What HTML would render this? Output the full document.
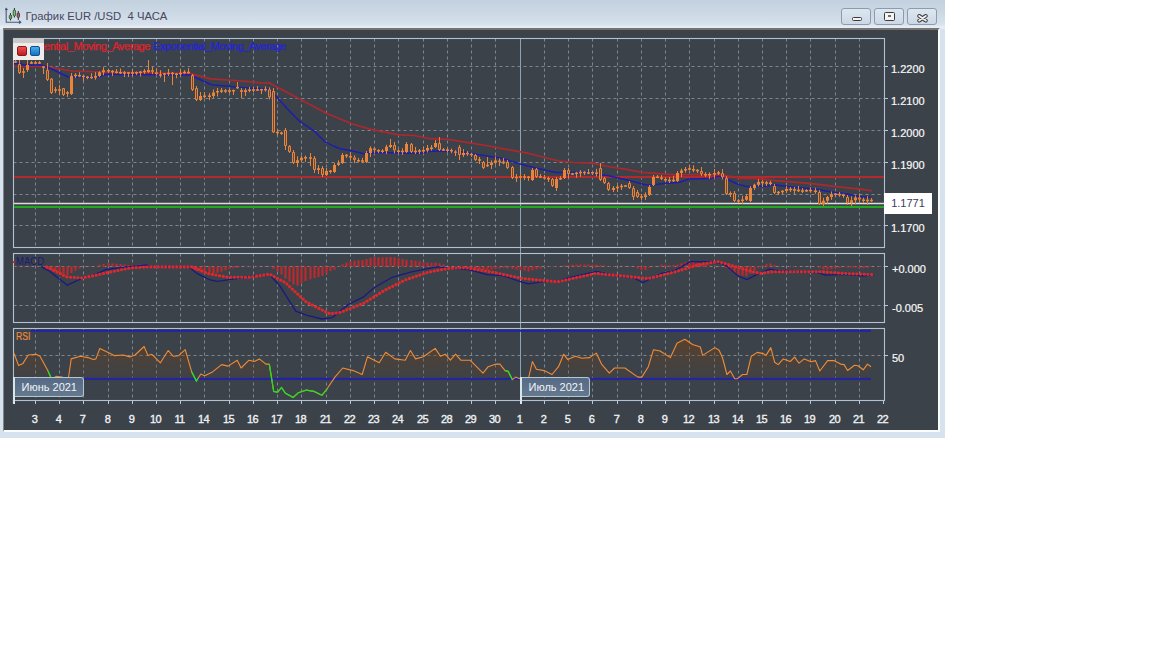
<!DOCTYPE html>
<html><head><meta charset="utf-8"><style>
*{margin:0;padding:0;box-sizing:border-box}
body{width:1152px;height:648px;background:#fff;position:relative;overflow:hidden;font-family:"Liberation Sans",sans-serif}
#win{position:absolute;left:0;top:0;width:945px;height:438px;background:#d6e2ee}
#title{position:absolute;left:0;top:0;width:945px;height:29px;background:linear-gradient(#c3d1de 0px,#cbd8e4 12px,#d6e1ed 24px,#e6edf5 27px,#e6edf5 29px)}
#ttext{position:absolute;left:25.5px;top:10px;font-size:11.3px;color:#48485e;white-space:pre;line-height:13px}
.btn{position:absolute;top:8px;width:30px;height:17px;border:1px solid #8c9cac;border-radius:3px;background:linear-gradient(#dde7f0,#ccd8e4)}
#inner{position:absolute;left:3px;top:28px;width:937px;height:404px;background:#3c424a;border-top:2px solid #77736e;border-left:1px solid #80858a;border-right:2px solid #fafcfe;border-bottom:2px solid #fafcfe}
.lbl{position:absolute;font-size:11px;color:#f8f8f8;-webkit-text-stroke:0.2px #f8f8f8;white-space:pre;line-height:12px}
.dl{position:absolute;top:412.5px;font-size:11px;color:#f0f2f4;-webkit-text-stroke:0.35px #f0f2f4;letter-spacing:-0.6px;white-space:pre;line-height:12px;transform:translateX(-50%)}
.month{position:absolute;height:20px;top:377px;background:linear-gradient(#566a86,#64788e);border:1px solid #b4c8d4;border-left:none;border-radius:0 3px 3px 0;color:#f2f4f6;font-size:11px;line-height:19px;padding-left:7.5px}
.mline{position:absolute;width:1.6px;background:#d4e8ea}
</style></head><body>
<div id="win">
<div id="title"></div>
<svg style="position:absolute;left:5px;top:7px" width="18" height="18" viewBox="0 0 18 18">
<path d="M1.2,1.5V15.2H15.6M-0.2,3L1.2,1.4L2.6,3M14,13.8L15.8,15.2L14,16.6" stroke="#4a5a7a" stroke-width="1.1" fill="none"/>
<path d="M5.5,6V13.5M9.4,1V10.5M13.3,4V13" stroke="#303030" stroke-width="1"/>
<rect x="4.3" y="8" width="2.4" height="4" rx="1" fill="#6aa86a" stroke="#2c4a2c" stroke-width="0.8"/>
<rect x="8.2" y="3" width="2.4" height="6" rx="1" fill="#7dbb7d" stroke="#2c4a2c" stroke-width="0.8"/>
<rect x="12.1" y="6" width="2.4" height="4.5" rx="1" fill="#a06070" stroke="#4a2c30" stroke-width="0.8"/>
</svg>
<div id="ttext">График EUR /USD  4 ЧАСА</div>
<div class="btn" style="left:841px"><div style="position:absolute;left:9.5px;top:7.5px;width:10.5px;height:4.5px;background:#f4f4f4;border:1px solid #3a3a3a;border-radius:1.5px"></div></div>
<div class="btn" style="left:874px"><div style="position:absolute;left:9px;top:3px;width:11px;height:9px;background:#f4f4f4;border:1.5px solid #3a3a3a;border-radius:1.5px"><div style="position:absolute;left:2.5px;top:2.2px;width:3.5px;height:2.2px;border:1px solid #707070;background:#ddd"></div></div></div>
<div class="btn" style="left:907px"><svg style="position:absolute;left:8px;top:2px" width="14" height="12" viewBox="0 0 14 12"><path d="M3.2,4.9L9.8,9.6M9.8,4.9L3.2,9.6" stroke="#3a3a3a" stroke-width="3.8" stroke-linecap="round"/><path d="M3.2,4.9L9.8,9.6M9.8,4.9L3.2,9.6" stroke="#f4f4f4" stroke-width="1.9" stroke-linecap="round"/></svg></div>
<div id="inner"></div>
</div>
<svg style="position:absolute;left:0;top:0" width="945" height="438" viewBox="0 0 945 438"><path d="M35.5,38.5V247.5M59.5,38.5V247.5M83.5,38.5V247.5M108.5,38.5V247.5M132.5,38.5V247.5M156.5,38.5V247.5M180.5,38.5V247.5M204.5,38.5V247.5M229.5,38.5V247.5M253.5,38.5V247.5M277.5,38.5V247.5M301.5,38.5V247.5M326.5,38.5V247.5M350.5,38.5V247.5M374.5,38.5V247.5M398.5,38.5V247.5M423.5,38.5V247.5M447.5,38.5V247.5M471.5,38.5V247.5M495.5,38.5V247.5M544.5,38.5V247.5M568.5,38.5V247.5M592.5,38.5V247.5M617.5,38.5V247.5M641.5,38.5V247.5M665.5,38.5V247.5M689.5,38.5V247.5M714.5,38.5V247.5M738.5,38.5V247.5M762.5,38.5V247.5M786.5,38.5V247.5M810.5,38.5V247.5M835.5,38.5V247.5M859.5,38.5V247.5M35.5,253.5V322.5M59.5,253.5V322.5M83.5,253.5V322.5M108.5,253.5V322.5M132.5,253.5V322.5M156.5,253.5V322.5M180.5,253.5V322.5M204.5,253.5V322.5M229.5,253.5V322.5M253.5,253.5V322.5M277.5,253.5V322.5M301.5,253.5V322.5M326.5,253.5V322.5M350.5,253.5V322.5M374.5,253.5V322.5M398.5,253.5V322.5M423.5,253.5V322.5M447.5,253.5V322.5M471.5,253.5V322.5M495.5,253.5V322.5M544.5,253.5V322.5M568.5,253.5V322.5M592.5,253.5V322.5M617.5,253.5V322.5M641.5,253.5V322.5M665.5,253.5V322.5M689.5,253.5V322.5M714.5,253.5V322.5M738.5,253.5V322.5M762.5,253.5V322.5M786.5,253.5V322.5M810.5,253.5V322.5M835.5,253.5V322.5M859.5,253.5V322.5M35.5,328.5V400.5M59.5,328.5V400.5M83.5,328.5V400.5M108.5,328.5V400.5M132.5,328.5V400.5M156.5,328.5V400.5M180.5,328.5V400.5M204.5,328.5V400.5M229.5,328.5V400.5M253.5,328.5V400.5M277.5,328.5V400.5M301.5,328.5V400.5M326.5,328.5V400.5M350.5,328.5V400.5M374.5,328.5V400.5M398.5,328.5V400.5M423.5,328.5V400.5M447.5,328.5V400.5M471.5,328.5V400.5M495.5,328.5V400.5M544.5,328.5V400.5M568.5,328.5V400.5M592.5,328.5V400.5M617.5,328.5V400.5M641.5,328.5V400.5M665.5,328.5V400.5M689.5,328.5V400.5M714.5,328.5V400.5M738.5,328.5V400.5M762.5,328.5V400.5M786.5,328.5V400.5M810.5,328.5V400.5M835.5,328.5V400.5M859.5,328.5V400.5M13.5,66.5H884.5M13.5,98.5H884.5M13.5,130.5H884.5M13.5,162.5H884.5M13.5,194.5H884.5M13.5,225.5H884.5M13.5,266.5H884.5M13.5,305.5H884.5M13.5,355.5H884.5" stroke="#7d868f" stroke-width="1" stroke-dasharray="3,3" fill="none"/><path d="M520.5,38.5V404" stroke="#8fa2b2" stroke-width="1" fill="none"/><path d="M13.5,400V404" stroke="#c0d4dc" stroke-width="1.2" fill="none"/><rect x="13.5" y="38.5" width="871.0" height="209.0" fill="none" stroke="#b0c3d2" stroke-width="1.1"/><rect x="13.5" y="253.5" width="871.0" height="69.0" fill="none" stroke="#b0c3d2" stroke-width="1.1"/><rect x="13.5" y="328.5" width="871.0" height="72.0" fill="none" stroke="#b0c3d2" stroke-width="1.1"/><path d="M35.5,400.5V404M59.5,400.5V404M83.5,400.5V404M108.5,400.5V404M132.5,400.5V404M156.5,400.5V404M180.5,400.5V404M204.5,400.5V404M229.5,400.5V404M253.5,400.5V404M277.5,400.5V404M301.5,400.5V404M326.5,400.5V404M350.5,400.5V404M374.5,400.5V404M398.5,400.5V404M423.5,400.5V404M447.5,400.5V404M471.5,400.5V404M495.5,400.5V404M520.5,400.5V404M544.5,400.5V404M568.5,400.5V404M592.5,400.5V404M617.5,400.5V404M641.5,400.5V404M665.5,400.5V404M689.5,400.5V404M714.5,400.5V404M738.5,400.5V404M762.5,400.5V404M786.5,400.5V404M810.5,400.5V404M835.5,400.5V404M859.5,400.5V404M883.5,400.5V404M884,66.5H888M884,98.5H888M884,130.5H888M884,162.5H888M884,194.5H888M884,225.5H888M884,266.5H888M884,305.5H888M884,355.5H888" stroke="#b9c8d4" stroke-width="1" fill="none"/><path d="M14,177H884" stroke="#b02a2e" stroke-width="1.9" fill="none"/><path d="M14,203.4H884" stroke="#dcdcdc" stroke-width="1.5" fill="none"/><path d="M14,207H884" stroke="#20a820" stroke-width="2.2" fill="none"/><polyline points="14.0,66.5 46.5,66.5 60.0,69.0 72.5,71.0 104.0,72.0 130.0,72.5 190.0,73.6 211.0,78.8 242.0,81.0 262.0,83.0 269.3,82.8 277.0,87.0 300.0,99.3 326.3,113.2 352.6,124.0 371.0,129.4 398.8,134.8 414.3,135.5 429.7,138.6 447.8,139.3 466.3,142.4 486.3,145.5 506.4,149.4 528.0,153.2 558.8,161.0 574.3,162.5 592.3,163.2 610.9,167.0 626.3,169.3 641.7,172.4 672.6,174.7 718.8,174.7 731.8,176.6 740.7,178.3 755.4,178.3 776.1,180.7 787.9,181.7 811.5,183.6 832.2,186.2 849.9,188.1 864.6,189.6 872.0,191.0" stroke="#ac282e" stroke-width="1.7" fill="none" stroke-linejoin="round"/><polyline points="14.0,63.5 21.0,63.5 22.0,65.0 41.0,65.0 48.5,67.5 68.3,77.0 98.5,77.0 105.8,74.5 130.0,74.5 190.0,75.0 211.5,84.7 242.0,87.6 269.0,89.3 275.4,95.4 287.8,109.3 300.1,121.7 314.0,130.9 324.8,141.7 334.0,146.3 340.2,148.7 349.5,150.2 364.9,154.0 368.0,152.5 420.0,153.2 432.3,150.9 463.2,151.7 478.6,154.8 500.2,157.9 520.3,164.0 535.7,167.9 555.8,172.5 589.7,172.2 600.0,174.7 607.8,175.5 617.0,177.8 631.0,180.9 644.8,184.8 654.0,184.8 666.4,183.2 678.7,182.5 689.5,179.0 711.0,178.6 718.8,176.3 726.0,178.8 739.2,184.7 746.6,186.6 764.3,186.2 776.1,185.1 787.9,186.6 802.6,188.1 817.4,189.6 832.2,192.1 846.9,194.0 858.7,196.5 870.5,196.9" stroke="#1e1eac" stroke-width="1.5" fill="none" stroke-linejoin="round"/><path d="M15.5,60.0V63.0M19.5,60.0V74.0M23.5,68.0V78.0M27.5,60.0V72.0M31.5,61.0V64.0M35.5,61.0V64.0M39.5,61.0V64.0M43.5,66.0V74.0M47.5,63.0V81.0M51.5,78.0V94.0M55.5,87.0V93.0M59.5,85.0V95.0M63.5,88.0V96.0M67.5,91.0V97.0M71.5,73.0V95.0M75.5,73.2V78.0M79.5,72.2V77.2M83.5,75.2V81.0M87.5,76.0V79.2M91.5,73.2V78.8M95.5,72.1V79.8M99.5,71.3V77.1M103.5,67.2V75.3M108.5,69.2V73.0M112.5,70.0V76.0M116.5,69.0V73.5M120.5,68.5V74.0M124.5,71.0V77.0M128.5,72.0V77.0M132.5,69.0V76.0M136.5,71.5V75.0M140.5,70.9V76.5M144.5,69.1V73.9M148.5,60.0V73.0M152.5,67.0V74.2M156.5,68.2V75.2M160.5,70.2V77.6M164.5,73.0V82.0M168.5,69.0V76.0M172.5,72.0V85.0M176.5,73.0V78.3M180.5,68.9V76.3M184.5,70.2V73.9M188.5,68.2V73.7M192.5,74.0V91.0M196.5,86.0V101.0M200.5,92.0V101.0M204.5,92.0V98.2M209.5,93.0V100.2M213.5,89.5V98.0M217.5,88.0V96.5M221.5,88.0V93.0M225.5,89.0V93.0M229.5,89.0V93.0M233.5,89.6V95.0M237.5,82.0V89.0M241.5,88.0V98.0M245.5,88.3V96.0M249.5,87.0V92.3M253.5,87.0V92.0M257.5,86.0V91.0M261.5,88.7V94.0M265.5,86.3V91.7M269.5,87.3V99.4M273.5,88.0V133.0M277.5,129.5V135.6M281.5,131.6V134.8M285.5,128.0V150.0M289.5,145.0V153.0M293.5,150.0V164.0M297.5,156.3V167.0M301.5,155.8V162.3M305.5,155.5V161.8M310.5,153.0V166.0M314.5,156.0V173.0M318.5,165.2V174.0M322.5,166.0V177.0M326.5,168.0V176.0M330.5,170.0V173.6M334.5,163.0V173.0M338.5,160.3V166.0M342.5,153.0V164.0M346.5,154.0V158.1M350.5,152.1V160.3M354.5,155.3V163.1M358.5,158.1V162.1M362.5,157.8V163.1M366.5,151.0V163.0M370.5,146.3V157.0M374.5,147.3V153.2M378.5,149.2V153.2M382.5,149.1V153.2M386.5,144.8V154.1M390.5,139.0V148.0M394.5,142.0V153.4M398.5,149.4V153.8M402.5,148.2V154.8M406.5,142.0V153.0M411.5,143.0V153.0M415.5,147.0V154.0M419.5,149.0V154.0M423.5,146.5V153.0M427.5,145.0V152.5M431.5,145.0V150.7M435.5,140.0V148.0M439.5,137.0V151.0M443.5,148.0V151.0M447.5,148.0V152.5M451.5,148.5V153.2M455.5,150.2V156.0M459.5,145.0V160.0M463.5,149.1V157.0M467.5,151.1V155.9M471.5,152.9V156.9M475.5,154.0V161.0M479.5,157.0V164.0M483.5,161.0V169.0M487.5,157.0V167.0M491.5,160.4V169.0M495.5,156.4V164.4M499.5,158.4V166.0M503.5,158.0V164.2M507.5,160.0V169.0M512.5,166.0V179.0M516.5,174.0V182.0M520.5,174.0V180.0M524.5,174.0V180.0M528.5,176.0V180.8M532.5,168.0V181.0M536.5,168.0V178.0M540.5,174.0V178.0M544.5,175.0V179.7M548.5,176.7V182.0M552.5,178.0V187.0M556.5,177.0V191.0M560.5,176.2V180.0M564.5,168.0V179.0M568.5,168.0V178.0M572.5,172.8V175.0M576.5,171.8V177.8M580.5,170.2V176.8M584.5,171.2V175.0M588.5,169.0V174.0M592.5,171.8V175.0M596.5,168.8V176.5M600.5,163.0V181.0M604.5,177.0V184.0M608.5,182.0V191.0M613.5,186.0V192.0M617.5,185.0V192.0M621.5,184.0V190.0M625.5,185.0V187.0M629.5,181.0V189.0M633.5,186.0V200.0M637.5,190.0V198.0M641.5,193.9V200.0M645.5,192.3V199.9M649.5,185.0V196.0M653.5,175.0V186.0M657.5,175.0V178.2M661.5,175.2V180.1M665.5,177.1V182.1M669.5,177.1V183.0M673.5,175.9V182.0M677.5,171.0V182.0M681.5,168.6V177.0M685.5,167.0V172.6M689.5,165.0V170.2M693.5,165.2V172.2M697.5,169.2V173.0M701.5,167.0V176.2M705.5,172.2V177.0M709.5,172.5V179.0M714.5,169.0V178.5M718.5,171.0V175.1M722.5,169.1V179.4M726.5,176.0V195.0M730.5,191.4V197.0M734.5,191.0V202.0M738.5,198.9V203.0M742.5,195.8V203.9M746.5,194.2V200.8M750.5,186.0V202.0M754.5,183.7V190.0M758.5,179.1V186.7M762.5,180.1V187.0M766.5,180.9V186.0M770.5,180.9V185.5M774.5,184.0V194.0M778.5,191.0V195.0M782.5,190.1V194.0M786.5,186.1V193.1M790.5,187.1V191.9M794.5,186.9V194.0M798.5,186.0V192.0M802.5,188.0V193.0M806.5,189.2V192.0M810.5,187.2V192.7M815.5,187.7V193.8M819.5,190.0V205.0M823.5,197.7V206.0M827.5,195.9V203.7M831.5,191.4V199.9M835.5,193.0V196.4M839.5,192.0V196.8M843.5,193.8V197.8M847.5,195.0V205.0M851.5,196.3V206.0M855.5,195.4V204.3M859.5,193.4V202.6M863.5,197.6V202.9M867.5,196.1V204.9M871.5,198.1V201.9" stroke="#ea843a" stroke-width="1" fill="none"/><path d="M14,61.2h3v1.5h-3zM22,71.2h3v1.5h-3zM26,65.0h3V70.0h-3zM30,62.2h3v1.5h-3zM34,62.2h3v1.5h-3zM38,62.2h3v1.5h-3zM54,89.2h3v1.5h-3zM58,89.2h3v1.5h-3zM66,92.2h3v1.5h-3zM70,76.0h3V94.0h-3zM74,74.8h3v1.5h-3zM78,74.9h3v1.5h-3zM82,75.8h3v1.5h-3zM86,76.4h3v1.5h-3zM90,76.7h3v1.5h-3zM94,76.1h3V77.8h-3zM98,72.3h3V76.1h-3zM102,70.2h3V72.3h-3zM107,69.9h3v1.5h-3zM111,70.8h3v1.5h-3zM115,71.5h3v1.5h-3zM119,72.0h3v1.5h-3zM123,72.2h3v1.5h-3zM127,72.2h3v1.5h-3zM131,72.2h3v1.5h-3zM135,72.0h3v1.5h-3zM139,71.4h3v1.5h-3zM143,70.8h3v1.5h-3zM147,70.0h3V72.0h-3zM159,74.2h3v1.5h-3zM163,73.2h3v1.5h-3zM167,72.8h3v1.5h-3zM171,72.8h3v1.5h-3zM175,73.4h3v1.5h-3zM179,72.8h3v1.5h-3zM183,71.8h3v1.5h-3zM187,71.7h3v1.5h-3zM199,96.0h3V100.0h-3zM203,95.4h3v1.5h-3zM208,95.4h3v1.5h-3zM212,92.5h3V96.0h-3zM216,91.0h3v1.5h-3zM220,90.2h3v1.5h-3zM224,90.2h3v1.5h-3zM228,90.2h3v1.5h-3zM232,90.0h3v1.5h-3zM236,86.8h3v1.5h-3zM244,90.3h3V92.0h-3zM248,89.4h3v1.5h-3zM252,89.2h3v1.5h-3zM256,89.2h3v1.5h-3zM260,89.1h3v1.5h-3zM264,88.7h3v1.5h-3zM276,131.8h3v1.5h-3zM280,132.5h3v1.5h-3zM296,160.3h3V163.0h-3zM300,157.8h3V160.3h-3zM304,156.9h3v1.5h-3zM309,157.2h3v1.5h-3zM317,168.2h3V170.0h-3zM325,171.0h3V175.0h-3zM329,170.6h3v1.5h-3zM333,165.0h3V172.0h-3zM337,163.3h3V165.0h-3zM341,155.0h3V163.0h-3zM345,154.8h3v1.5h-3zM349,156.0h3v1.5h-3zM357,159.9h3v1.5h-3zM361,160.2h3v1.5h-3zM365,153.0h3V162.0h-3zM369,148.3h3V153.0h-3zM377,149.9h3v1.5h-3zM381,150.4h3v1.5h-3zM385,146.8h3V151.1h-3zM389,145.0h3V147.0h-3zM397,150.4h3v1.5h-3zM401,150.8h3v1.5h-3zM405,144.0h3V152.0h-3zM414,150.8h3v1.5h-3zM418,150.2h3v1.5h-3zM422,150.0h3v1.5h-3zM426,148.0h3V150.5h-3zM430,147.6h3v1.5h-3zM434,143.0h3V147.0h-3zM442,149.3h3v1.5h-3zM446,149.5h3v1.5h-3zM450,150.1h3v1.5h-3zM462,153.1h3V155.0h-3zM466,152.8h3v1.5h-3zM470,153.7h3v1.5h-3zM478,159.2h3v1.5h-3zM486,164.8h3v1.5h-3zM490,162.4h3V165.0h-3zM494,160.4h3V162.4h-3zM502,161.8h3v1.5h-3zM515,176.8h3v1.5h-3zM519,176.2h3v1.5h-3zM523,176.2h3v1.5h-3zM527,176.6h3v1.5h-3zM531,170.0h3V180.0h-3zM539,176.2h3v1.5h-3zM547,178.1h3v1.5h-3zM555,179.0h3V188.0h-3zM559,177.9h3v1.5h-3zM563,170.0h3V178.0h-3zM571,173.2h3v1.5h-3zM575,172.6h3v1.5h-3zM579,171.8h3v1.5h-3zM583,171.8h3v1.5h-3zM587,172.2h3v1.5h-3zM591,172.1h3v1.5h-3zM595,172.4h3v1.5h-3zM612,188.0h3V190.0h-3zM616,186.7h3v1.5h-3zM620,185.7h3v1.5h-3zM624,185.3h3v1.5h-3zM640,196.2h3v1.5h-3zM644,195.3h3V196.9h-3zM648,187.0h3V195.0h-3zM652,177.0h3V185.0h-3zM656,176.4h3v1.5h-3zM664,178.9h3v1.5h-3zM668,179.8h3v1.5h-3zM672,179.7h3v1.5h-3zM676,173.0h3V181.0h-3zM680,170.6h3V173.0h-3zM684,169.0h3V170.6h-3zM688,168.3h3v1.5h-3zM692,168.9h3v1.5h-3zM696,169.8h3v1.5h-3zM704,173.9h3v1.5h-3zM708,174.0h3v1.5h-3zM713,173.0h3V174.5h-3zM717,172.3h3v1.5h-3zM729,192.9h3v1.5h-3zM737,200.2h3v1.5h-3zM741,199.6h3v1.5h-3zM745,196.2h3V199.8h-3zM749,188.0h3V201.0h-3zM753,184.7h3V188.0h-3zM757,182.1h3V184.7h-3zM761,181.8h3v1.5h-3zM765,182.2h3v1.5h-3zM769,182.4h3v1.5h-3zM777,191.8h3v1.5h-3zM781,190.8h3v1.5h-3zM785,189.1h3V191.1h-3zM789,188.8h3v1.5h-3zM793,189.2h3v1.5h-3zM797,189.7h3v1.5h-3zM801,190.2h3v1.5h-3zM805,189.9h3v1.5h-3zM809,189.7h3v1.5h-3zM814,190.5h3v1.5h-3zM822,200.7h3V204.0h-3zM826,196.9h3V200.7h-3zM830,194.4h3V196.9h-3zM834,193.5h3v1.5h-3zM838,193.7h3v1.5h-3zM842,194.6h3v1.5h-3zM850,200.3h3V203.0h-3zM854,197.4h3V200.3h-3zM862,199.5h3v1.5h-3zM866,199.7h3v1.5h-3zM870,199.8h3v1.5h-3z" fill="#ea843a"/><path d="M18.5,64.5h2V72.5h-2zM42.5,66.5h2V67.5h-2zM46.5,70.5h2V79.5h-2zM50.5,79.0h2V92.5h-2zM62.5,88.5h2V94.5h-2zM151.5,70.5h2V71.7h-2zM155.5,72.7h2V73.8h-2zM191.5,75.5h2V89.5h-2zM195.5,88.5h2V99.5h-2zM240.5,90.5h2V91.5h-2zM268.5,89.8h2V96.9h-2zM272.5,91.5h2V132.0h-2zM284.5,130.5h2V145.5h-2zM288.5,146.5h2V151.5h-2zM292.5,152.5h2V162.5h-2zM313.5,158.5h2V169.5h-2zM321.5,168.5h2V174.5h-2zM353.5,157.8h2V159.6h-2zM373.5,148.8h2V149.7h-2zM393.5,145.5h2V149.9h-2zM410.5,144.5h2V151.5h-2zM438.5,143.5h2V149.5h-2zM454.5,151.7h2V152.5h-2zM458.5,147.5h2V154.5h-2zM474.5,155.5h2V159.5h-2zM482.5,162.5h2V167.5h-2zM498.5,160.9h2V161.5h-2zM506.5,162.5h2V167.5h-2zM511.5,167.5h2V177.5h-2zM535.5,169.5h2V176.5h-2zM543.5,177.5h2V178.2h-2zM551.5,179.5h2V185.5h-2zM567.5,170.5h2V173.5h-2zM599.5,168.5h2V179.5h-2zM603.5,178.5h2V182.5h-2zM607.5,183.5h2V189.5h-2zM628.5,183.5h2V187.5h-2zM632.5,188.5h2V196.5h-2zM636.5,192.5h2V196.5h-2zM660.5,177.7h2V178.6h-2zM700.5,171.5h2V173.7h-2zM721.5,173.6h2V176.9h-2zM725.5,178.5h2V193.5h-2zM733.5,193.5h2V200.5h-2zM773.5,186.5h2V192.5h-2zM818.5,192.5h2V203.5h-2zM846.5,197.5h2V202.5h-2zM858.5,197.9h2V199.1h-2z" stroke="#ea843a" stroke-width="1" fill="#6a4a38"/><path d="M47.5,266.5V269.4M51.5,266.5V270.0M55.5,266.5V271.2M59.5,266.5V272.5M63.5,266.5V273.7M67.5,266.5V274.9M71.5,266.5V273.0M75.5,266.5V270.8M79.5,266.5V268.6M99.5,266.5V264.7M103.5,266.5V263.7M108.5,266.5V263.0M112.5,266.5V263.4M116.5,266.5V263.7M120.5,266.5V264.0M124.5,266.5V264.4M128.5,266.5V264.9M132.5,266.5V265.0M136.5,266.5V264.8M140.5,266.5V264.6M144.5,266.5V264.4M148.5,266.5V265.2M192.5,266.5V269.0M196.5,266.5V270.7M200.5,266.5V271.3M204.5,266.5V271.7M209.5,266.5V272.6M213.5,266.5V272.9M217.5,266.5V272.8M221.5,266.5V271.6M225.5,266.5V270.2M229.5,266.5V268.9M233.5,266.5V268.3M237.5,266.5V267.7M273.5,266.5V269.0M277.5,266.5V271.5M281.5,266.5V274.4M285.5,266.5V278.8M289.5,266.5V281.7M293.5,266.5V284.4M297.5,266.5V285.6M301.5,266.5V283.3M305.5,266.5V280.9M310.5,266.5V279.2M314.5,266.5V278.1M318.5,266.5V277.1M322.5,266.5V276.0M326.5,266.5V273.4M330.5,266.5V270.9M334.5,266.5V269.7M342.5,266.5V264.2M346.5,266.5V262.4M350.5,266.5V261.2M354.5,266.5V260.8M358.5,266.5V260.3M362.5,266.5V259.9M366.5,266.5V259.0M370.5,266.5V258.0M374.5,266.5V257.0M378.5,266.5V257.2M382.5,266.5V257.4M386.5,266.5V257.3M390.5,266.5V257.0M394.5,266.5V257.2M398.5,266.5V258.1M402.5,266.5V259.0M406.5,266.5V259.8M411.5,266.5V260.1M415.5,266.5V260.7M419.5,266.5V261.3M423.5,266.5V261.9M427.5,266.5V262.5M431.5,266.5V262.7M435.5,266.5V262.6M439.5,266.5V263.3M443.5,266.5V264.5M463.5,266.5V267.9M467.5,266.5V268.1M471.5,266.5V268.2M475.5,266.5V268.7M479.5,266.5V269.2M483.5,266.5V269.7M487.5,266.5V270.1M491.5,266.5V269.6M495.5,266.5V269.0M499.5,266.5V268.4M503.5,266.5V267.9M507.5,266.5V268.4M512.5,266.5V269.1M516.5,266.5V269.7M520.5,266.5V270.2M524.5,266.5V270.8M528.5,266.5V271.5M532.5,266.5V270.6M536.5,266.5V269.5M540.5,266.5V268.4M564.5,266.5V265.3M568.5,266.5V264.9M572.5,266.5V264.7M576.5,266.5V264.6M580.5,266.5V264.6M584.5,266.5V264.5M588.5,266.5V264.5M592.5,266.5V264.5M596.5,266.5V264.4M600.5,266.5V264.9M604.5,266.5V265.4M637.5,266.5V268.6M641.5,266.5V270.3M645.5,266.5V270.0M649.5,266.5V267.8M661.5,266.5V264.6M665.5,266.5V264.7M669.5,266.5V264.9M673.5,266.5V265.1M677.5,266.5V264.4M681.5,266.5V263.2M685.5,266.5V262.0M689.5,266.5V260.8M693.5,266.5V261.4M697.5,266.5V262.7M701.5,266.5V263.9M705.5,266.5V264.5M709.5,266.5V265.4M726.5,266.5V268.3M730.5,266.5V270.6M734.5,266.5V272.9M738.5,266.5V275.3M742.5,266.5V275.8M746.5,266.5V276.2M750.5,266.5V273.7M754.5,266.5V270.5M758.5,266.5V267.6M762.5,266.5V265.4M766.5,266.5V264.2M770.5,266.5V263.5M774.5,266.5V264.7M819.5,266.5V267.8M823.5,266.5V269.3M827.5,266.5V269.6M831.5,266.5V269.0M835.5,266.5V268.5M839.5,266.5V267.9M847.5,266.5V267.6M851.5,266.5V267.7M855.5,266.5V267.8M859.5,266.5V268.0M863.5,266.5V268.3M867.5,266.5V267.7" stroke="#bc2a2e" stroke-width="2.2" fill="none"/><path d="M14,266.5H884" stroke="#c0282c" stroke-width="1" stroke-dasharray="1,4" fill="none"/><polyline points="41.0,266.7 49.0,270.8 67.3,285.2 82.9,278.0 94.6,274.7 106.4,269.5 120.7,267.6 146.7,265.0 150.0,266.9 189.0,266.9 196.9,273.4 209.9,280.0 217.7,281.3 236.0,278.6 254.0,276.0 269.8,274.7 280.2,286.5 295.8,311.2 306.3,315.1 321.9,319.0 332.3,317.7 347.9,304.7 363.5,296.9 374.0,287.8 392.2,277.3 410.4,272.1 436.5,266.9 450.0,268.2 468.6,269.5 486.9,274.7 502.5,275.5 523.3,282.6 528.5,283.9 544.2,281.3 557.2,281.3 570.2,277.3 596.3,271.4 617.1,276.0 632.7,277.3 643.1,282.6 661.4,273.4 674.4,270.8 690.0,261.7 705.6,261.7 721.3,263.0 726.0,265.6 738.2,276.0 746.9,279.5 759.0,273.4 769.4,269.1 778.1,270.8 818.0,272.6 825.0,275.2 842.4,274.3 856.3,275.2 863.2,276.0 873.6,274.7" stroke="#1a1a80" stroke-width="1.3" fill="none"/><polyline points="47.0,267.0 67.0,277.0 82.0,278.0 106.0,273.0 130.0,268.0 150.0,266.9 191.7,266.9 207.3,273.4 228.1,277.3 249.0,277.3 269.8,274.2 285.4,282.6 306.3,302.1 329.7,313.8 340.1,312.5 363.5,303.4 384.4,290.4 405.2,280.0 428.6,272.1 449.5,268.2 466.0,267.7 492.1,272.1 523.3,278.6 557.2,281.8 596.3,273.4 622.3,276.0 648.3,278.6 674.4,272.1 700.4,264.3 718.6,261.7 734.7,266.5 752.0,271.7 760.8,273.4 772.9,271.7 821.5,271.7 842.4,273.4 873.6,274.7" stroke="#e0282c" stroke-width="3.1" stroke-dasharray="0.1,3.6" stroke-linecap="round" fill="none"/><path d="M31,330.8H871M14,378.9H871" stroke="#2222a6" stroke-width="2.1" fill="none"/><defs><linearGradient id="rg" x1="0" y1="0" x2="0" y2="1"><stop offset="0" stop-color="#74400f" stop-opacity="0.55"/><stop offset="1" stop-color="#5a4028" stop-opacity="0.12"/></linearGradient></defs><polygon points="13.9,378.8 13.9,353.0 18.5,365.4 23.0,363.4 28.2,355.0 36.0,354.3 40.0,356.3 47.8,370.6 52.0,378.8 56.0,376.4 62.0,377.0 66.0,378.8 68.6,377.0 71.2,358.9 80.3,356.3 88.1,357.6 93.3,359.5 95.9,358.9 99.8,348.4 110.3,353.6 114.2,355.6 123.3,355.0 129.8,356.9 135.0,355.0 144.1,346.5 148.0,355.6 151.9,354.3 160.4,362.8 168.2,350.5 173.4,356.3 178.6,355.7 185.2,349.7 191.7,371.9 196.4,378.8 200.8,374.0 204.7,375.8 212.5,371.9 221.6,364.6 228.1,366.1 237.2,360.2 241.1,368.0 249.0,360.2 254.2,361.5 259.4,358.9 265.9,364.1 269.3,364.1 273.7,378.8 277.6,378.8 281.5,378.8 285.4,378.8 293.2,378.8 298.4,378.8 306.3,378.8 314.1,378.8 321.9,378.8 327.1,378.8 334.9,377.1 342.7,368.0 353.1,370.6 362.2,374.5 367.4,356.8 379.2,362.8 385.7,352.3 394.8,358.9 405.2,360.2 410.4,350.5 415.6,358.9 423.4,356.8 435.2,348.4 440.4,356.3 445.2,354.2 450.4,360.2 455.6,354.2 460.8,360.2 470.0,360.2 483.0,373.2 488.2,366.7 496.0,364.1 499.9,364.1 505.1,370.6 508.2,371.4 512.4,378.8 515.5,377.1 519.4,378.4 528.5,378.4 532.4,361.5 536.4,369.3 544.2,370.6 552.0,374.5 558.5,366.7 563.7,354.2 567.6,359.4 575.4,356.3 581.9,358.3 589.7,357.6 596.3,353.1 601.5,364.1 609.3,373.2 614.5,368.0 624.9,368.0 637.9,377.1 641.8,377.1 648.3,366.7 653.5,349.7 660.1,351.0 670.4,357.6 677.0,343.2 684.8,339.3 692.6,344.5 700.4,347.1 702.6,355.4 714.8,347.6 719.1,350.2 722.6,358.0 726.9,374.5 730.4,371.0 734.7,378.8 737.3,378.8 742.5,374.5 746.9,374.5 751.2,356.3 757.3,352.4 763.4,353.6 766.0,355.4 770.8,347.6 774.7,362.3 778.1,364.6 783.3,358.9 790.3,361.5 794.6,357.1 799.0,363.2 804.2,358.9 811.1,361.8 815.5,360.6 819.8,371.0 827.6,360.6 833.7,360.6 840.6,364.1 844.1,364.6 847.6,370.5 854.5,365.3 858.0,365.8 863.2,369.8 867.5,364.1 871.0,366.7 871.0,378.8" fill="url(#rg)"/><polyline points="13.9,353.0 18.5,365.4 23.0,363.4 28.2,355.0 36.0,354.3 40.0,356.3 47.8,370.6 52.0,380.0 56.0,376.4 62.0,377.0 66.0,379.0 68.6,377.0 71.2,358.9 80.3,356.3 88.1,357.6 93.3,359.5 95.9,358.9 99.8,348.4 110.3,353.6 114.2,355.6 123.3,355.0 129.8,356.9 135.0,355.0 144.1,346.5 148.0,355.6 151.9,354.3 160.4,362.8 168.2,350.5 173.4,356.3 178.6,355.7 185.2,349.7 191.7,371.9 196.4,381.0 200.8,374.0 204.7,375.8 212.5,371.9 221.6,364.6 228.1,366.1 237.2,360.2 241.1,368.0 249.0,360.2 254.2,361.5 259.4,358.9 265.9,364.1 269.3,364.1 273.7,391.4 277.6,392.2 281.5,387.5 285.4,393.2 293.2,397.4 298.4,392.7 306.3,390.1 314.1,391.4 321.9,395.3 327.1,388.8 334.9,377.1 342.7,368.0 353.1,370.6 362.2,374.5 367.4,356.8 379.2,362.8 385.7,352.3 394.8,358.9 405.2,360.2 410.4,350.5 415.6,358.9 423.4,356.8 435.2,348.4 440.4,356.3 445.2,354.2 450.4,360.2 455.6,354.2 460.8,360.2 470.0,360.2 483.0,373.2 488.2,366.7 496.0,364.1 499.9,364.1 505.1,370.6 508.2,371.4 512.4,379.7 515.5,377.1 519.4,378.4 528.5,378.4 532.4,361.5 536.4,369.3 544.2,370.6 552.0,374.5 558.5,366.7 563.7,354.2 567.6,359.4 575.4,356.3 581.9,358.3 589.7,357.6 596.3,353.1 601.5,364.1 609.3,373.2 614.5,368.0 624.9,368.0 637.9,377.1 641.8,377.1 648.3,366.7 653.5,349.7 660.1,351.0 670.4,357.6 677.0,343.2 684.8,339.3 692.6,344.5 700.4,347.1 702.6,355.4 714.8,347.6 719.1,350.2 722.6,358.0 726.9,374.5 730.4,371.0 734.7,378.8 737.3,378.8 742.5,374.5 746.9,374.5 751.2,356.3 757.3,352.4 763.4,353.6 766.0,355.4 770.8,347.6 774.7,362.3 778.1,364.6 783.3,358.9 790.3,361.5 794.6,357.1 799.0,363.2 804.2,358.9 811.1,361.8 815.5,360.6 819.8,371.0 827.6,360.6 833.7,360.6 840.6,364.1 844.1,364.6 847.6,370.5 854.5,365.3 858.0,365.8 863.2,369.8 867.5,364.1 871.0,366.7" stroke="#f08c36" stroke-width="1.1" fill="none" stroke-linejoin="round"/><polyline points="47.8,370.6 52.0,380.0 56.0,376.4" stroke="#22dd22" stroke-width="1.3" fill="none"/><polyline points="191.7,371.9 196.4,381.0 198.0,378.0" stroke="#22dd22" stroke-width="1.3" fill="none"/><polyline points="269.3,364.1 273.7,391.4 277.6,392.2 281.5,387.5 285.4,393.2 293.2,397.4 298.4,392.7 306.3,390.1 314.1,391.4 321.9,395.3 327.1,388.8" stroke="#22dd22" stroke-width="1.3" fill="none"/><polyline points="505.1,370.6 508.2,371.4 512.4,379.7" stroke="#22dd22" stroke-width="1.3" fill="none"/></svg>
<div class="lbl" style="left:891px;top:63.0px">1.2200</div>
<div class="lbl" style="left:891px;top:95.0px">1.2100</div>
<div class="lbl" style="left:891px;top:127.0px">1.2000</div>
<div class="lbl" style="left:891px;top:159.0px">1.1900</div>
<div class="lbl" style="left:891px;top:222.0px">1.1700</div>
<div class="lbl" style="left:892px;top:263.0px">+0.000</div>
<div class="lbl" style="left:892px;top:302.0px">-0.005</div>
<div class="lbl" style="left:892px;top:352.0px">50</div>
<div style="position:absolute;left:884px;top:193px;width:48px;height:21px;background:#fff;color:#3d3b5c;font-size:11px;line-height:21px;text-align:center">1.1771</div>
<div style="position:absolute;right:1002px;top:40px;font-size:11px;letter-spacing:-0.42px;white-space:pre;line-height:12px;color:#e0222a;-webkit-text-stroke:0.25px #e0222a">Exponential_Moving_Average</div>
<div style="position:absolute;left:153px;top:40px;font-size:11px;letter-spacing:-0.5px;white-space:pre;line-height:12px;color:#2424d8;-webkit-text-stroke:0.25px #2424d8">Exponential_Moving_Average</div>
<div style="position:absolute;left:13px;top:38px;width:31px;height:22px;background:#ececec;border-top:5px solid #c9c9c9"></div>
<div style="position:absolute;left:17px;top:46px;width:10px;height:10px;border-radius:2px;background:linear-gradient(#f05050,#c01c20);border:1px solid #8a1a1a"></div>
<div style="position:absolute;left:30px;top:46px;width:10px;height:10px;border-radius:2px;background:linear-gradient(#40b0ec,#1670c0);border:1px solid #1a4a8a"></div>
<div style="position:absolute;left:16px;top:255px;font-size:11px;color:#1c1c74;transform:scaleX(0.87);transform-origin:0 0;line-height:12px">MACD</div>
<div style="position:absolute;left:13px;top:261px;width:2px;height:2px;background:#e02020"></div>
<div style="position:absolute;left:15.8px;top:330px;font-size:11px;color:#ee8a3a;-webkit-text-stroke:0.2px #ee8a3a;transform:scaleX(0.79);transform-origin:0 0;line-height:12px">RSI</div>
<div class="month" style="left:14px;width:70px">Июнь 2021</div>
<div class="mline" style="left:13.2px;top:377px;height:27px"></div>
<div class="month" style="left:521px;width:69px">Июль 2021</div>
<div class="mline" style="left:520.2px;top:377px;height:27px"></div>
<div class="dl" style="left:34.5px">3</div>
<div class="dl" style="left:58.5px">4</div>
<div class="dl" style="left:82.5px">7</div>
<div class="dl" style="left:107.5px">8</div>
<div class="dl" style="left:131.5px">9</div>
<div class="dl" style="left:155.5px">10</div>
<div class="dl" style="left:179.5px">11</div>
<div class="dl" style="left:203.5px">14</div>
<div class="dl" style="left:228.5px">15</div>
<div class="dl" style="left:252.5px">16</div>
<div class="dl" style="left:276.5px">17</div>
<div class="dl" style="left:300.5px">18</div>
<div class="dl" style="left:325.5px">21</div>
<div class="dl" style="left:349.5px">22</div>
<div class="dl" style="left:373.5px">23</div>
<div class="dl" style="left:397.5px">24</div>
<div class="dl" style="left:422.5px">25</div>
<div class="dl" style="left:446.5px">28</div>
<div class="dl" style="left:470.5px">29</div>
<div class="dl" style="left:494.5px">30</div>
<div class="dl" style="left:519.5px">1</div>
<div class="dl" style="left:543.5px">2</div>
<div class="dl" style="left:567.5px">5</div>
<div class="dl" style="left:591.5px">6</div>
<div class="dl" style="left:616.5px">7</div>
<div class="dl" style="left:640.5px">8</div>
<div class="dl" style="left:664.5px">9</div>
<div class="dl" style="left:688.5px">12</div>
<div class="dl" style="left:713.5px">13</div>
<div class="dl" style="left:737.5px">14</div>
<div class="dl" style="left:761.5px">15</div>
<div class="dl" style="left:785.5px">16</div>
<div class="dl" style="left:809.5px">19</div>
<div class="dl" style="left:834.5px">20</div>
<div class="dl" style="left:858.5px">21</div>
<div class="dl" style="left:882.5px">22</div>
</body></html>
